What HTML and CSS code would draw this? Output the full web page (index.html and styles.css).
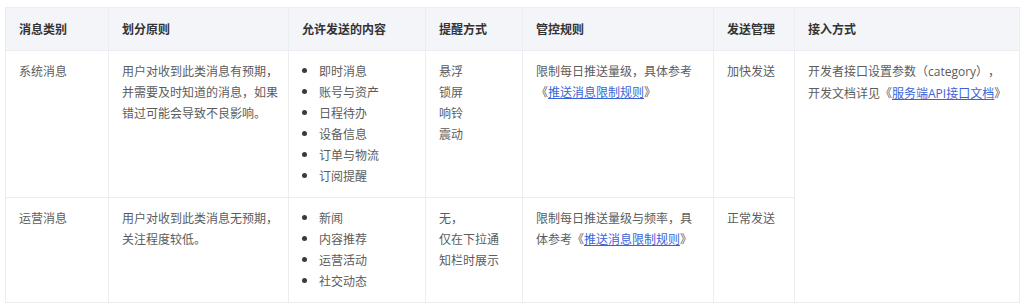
FILE: index.html
```html
<!DOCTYPE html>
<html lang="zh-CN">
<head>
<meta charset="utf-8">
<link rel="stylesheet" href="styles.css">
</head>
<body>
<table class="msg-table">
  <colgroup>
    <col class="c1"><col class="c2"><col class="c3"><col class="c4"><col class="c5"><col class="c6"><col class="c7">
  </colgroup>
  <thead>
    <tr>
      <th>消息类别</th>
      <th>划分原则</th>
      <th>允许发送的内容</th>
      <th>提醒方式</th>
      <th>管控规则</th>
      <th>发送管理</th>
      <th>接入方式</th>
    </tr>
  </thead>
  <tbody>
    <tr>
      <td>系统消息</td>
      <td>用户对收到此类消息有预期，<br>并需要及时知道的消息，如果<br>错过可能会导致不良影响。</td>
      <td>
        <ul class="bullets">
          <li>即时消息</li>
          <li>账号与资产</li>
          <li>日程待办</li>
          <li>设备信息</li>
          <li>订单与物流</li>
          <li>订阅提醒</li>
        </ul>
      </td>
      <td>悬浮<br>锁屏<br>响铃<br>震动</td>
      <td>限制每日推送量级，具体参考<br>《<a class="link" href="#">推送消息限制规则</a>》</td>
      <td>加快发送</td>
      <td rowspan="2">开发者接口设置参数（<span class="latin">category</span>），<br>开发文档详见《<a class="link" href="#">服务端<span class="latin">API</span>接口文档</a>》</td>
    </tr>
    <tr>
      <td>运营消息</td>
      <td>用户对收到此类消息无预期，<br>关注程度较低。</td>
      <td>
        <ul class="bullets">
          <li>新闻</li>
          <li>内容推荐</li>
          <li>运营活动</li>
          <li>社交动态</li>
        </ul>
      </td>
      <td>无，<br>仅在下拉通<br>知栏时展示</td>
      <td>限制每日推送量级与频率，具<br>体参考《<a class="link" href="#">推送消息限制规则</a>》</td>
      <td>正常发送</td>
    </tr>
  </tbody>
</table>
</body>
</html>
```

FILE: styles.css
```css
html, body {
  margin: 0;
  padding: 0;
  background: #ffffff;
}

body {
  padding: 7px 0 0 5px;
  font-family: "Noto Sans CJK SC", "Noto Sans", sans-serif;
  font-size: 12px;
  line-height: 21px;
  color: #5c5c5c;
  text-spacing-trim: space-all;
}

.msg-table {
  border-collapse: collapse;
  table-layout: fixed;
  width: 1014px;
}

.c1 { width: 103px; }
.c2 { width: 180px; }
.c3 { width: 137px; }
.c4 { width: 97px; }
.c5 { width: 191px; }
.c6 { width: 81px; }
.c7 { width: 225px; }

.msg-table th,
.msg-table td {
  border: 1px solid #ebedf0;
  padding: 9px 8px 11px 13px;
  text-align: left;
  vertical-align: top;
  white-space: nowrap;
}

.msg-table th {
  background: #f3f5f9;
  color: #333333;
  font-weight: 700;
  padding-top: 10px;
  padding-bottom: 11px;
}

.latin {
  font-family: "Open Sans", "Noto Sans", sans-serif;
}

.bullets {
  margin: 0;
  padding: 0;
  list-style: none;
}

.bullets li {
  display: flex;
  align-items: center;
}

.bullets li::before {
  content: "";
  width: 5px;
  height: 5px;
  border-radius: 50%;
  background: #3a3a3a;
  margin: 0 12px 0 0;
  flex: none;
}

.link {
  color: #3b63d8;
  text-decoration: underline;
}
```
